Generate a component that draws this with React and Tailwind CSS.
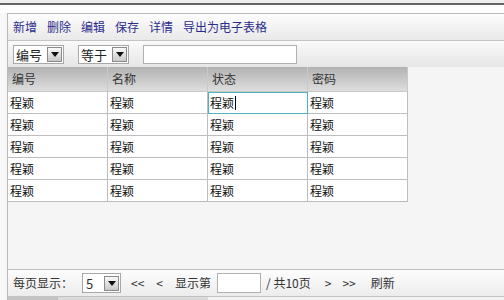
const font = { fontFamily: '"Noto Sans CJK SC", "Noto Sans", sans-serif' };

const columns = ["编号", "名称", "状态", "密码"];
const rows = [0, 1, 2, 3, 4];

function Arrow() {
    return (
        <span className="flex h-[15px] w-[15px] items-center justify-center border border-[#8a8a8a] bg-gradient-to-b from-[#fafafa] to-[#c9c9c9]">
            <svg width="8" height="5" viewBox="0 0 8 5">
                <path d="M0 0 L8 0 L4 5 Z" fill="#111"/>
            </svg>
        </span>
    );
}

function Select({label, width}) {
    return (
        <div className={`flex h-[19px] items-center justify-between border border-[#a8a8a8] bg-white pl-[2px] pr-px ${width}`}>
            <span className="text-[13px] leading-none text-[#222]">{label}</span>
            <Arrow/>
        </div>
    );
}

export default function App() {
    return (
        <div className="h-[300px] w-[504px] overflow-hidden bg-[#f8f8f8]" style={font}>
            <div className="h-[3px] bg-[#efefef]"/>
            <div className="h-[2px] bg-[#666]"/>
            <div className="h-[8px] bg-white"/>

            <div className="ml-[7px] w-[497px] border-l border-t border-[#b9b9b9]">
                <div className="flex h-[27px] items-center gap-[10px] border-b border-[#c4c4c4] bg-gradient-to-b from-[#fdfdfd] to-[#e9e9e9] pl-[5px] text-[12px] text-[#2c2c8c]">
                    <span>新增</span>
                    <span>删除</span>
                    <span>编辑</span>
                    <span>保存</span>
                    <span>详情</span>
                    <span>导出为电子表格</span>
                </div>

                <div className="flex h-[26px] items-center bg-gradient-to-b from-[#fafafa] to-[#e6e6e6] pl-[5px]">
                    <Select label="编号" width="w-[51px]"/>
                    <div className="w-[14px]"/>
                    <Select label="等于" width="w-[51px]"/>
                    <div className="w-[14px]"/>
                    <div className="h-[19px] w-[154px] border border-[#b0b0b0] bg-white"/>
                </div>

                <div className="h-[202px] bg-[#f5f5f5]">
                    <div className="grid w-[400px] grid-cols-4">
                        {columns.map((c) => (
                            <div key={c} className="flex h-[25px] items-center border-b border-r border-[#c8c8c8] bg-gradient-to-b from-[#b2b2b2] to-[#dedede] pl-[4px] text-[12px] text-[#333]">
                                {c}
                            </div>
                        ))}
                        {rows.map((r) =>
                            columns.map((c, i) => {
                                const active = r === 0 && i === 2;
                                return (
                                    <div
                                        key={`${r}-${c}`}
                                        className={`flex h-[22px] items-center border-b border-r border-[#bdbdbd] bg-white pl-[2px] text-[12px] text-[#111] ${
                                            active ? "outline outline-1 -outline-offset-1 outline-[#4fb3bb]" : ""
                                        }`}
                                    >
                                        程颖
                                        {active && <span className="ml-px inline-block h-[14px] w-px bg-black"/>}
                                    </div>
                                );
                            })
                        )}
                    </div>
                </div>

                <div className="flex h-[28px] items-center border-b border-t border-[#c2c2c2] bg-gradient-to-b from-[#fdfdfd] to-[#ececec] pl-[5px] text-[12px] text-[#333]">
                    <span>每页显示：</span>
                    <div className="ml-[9px] flex h-[20px] w-[39px] items-center justify-between border border-[#a8a8a8] bg-white pl-[3px] pr-px">
                        <span className="text-[13px] leading-none">5</span>
                        <Arrow/>
                    </div>
                    <span className="ml-[10px]">&lt;&lt;</span>
                    <span className="ml-[12px]">&lt;</span>
                    <span className="ml-[12px]">显示第</span>
                    <div className="ml-[6px] h-[20px] w-[44px] border border-[#b0b0b0] bg-white"/>
                    <span className="ml-[5px]">/ 共10页</span>
                    <span className="ml-[14px]">&gt;</span>
                    <span className="ml-[11px]">&gt;&gt;</span>
                    <span className="ml-[15px]">刷新</span>
                </div>

                <div className="flex h-[5px]">
                    <div className="w-[50px] bg-[#c4c4c4]"/>
                    <div className="w-[150px] bg-[#dadada]"/>
                    <div className="flex-1 bg-[#f3f3f3]"/>
                </div>
            </div>
        </div>
    );
}
